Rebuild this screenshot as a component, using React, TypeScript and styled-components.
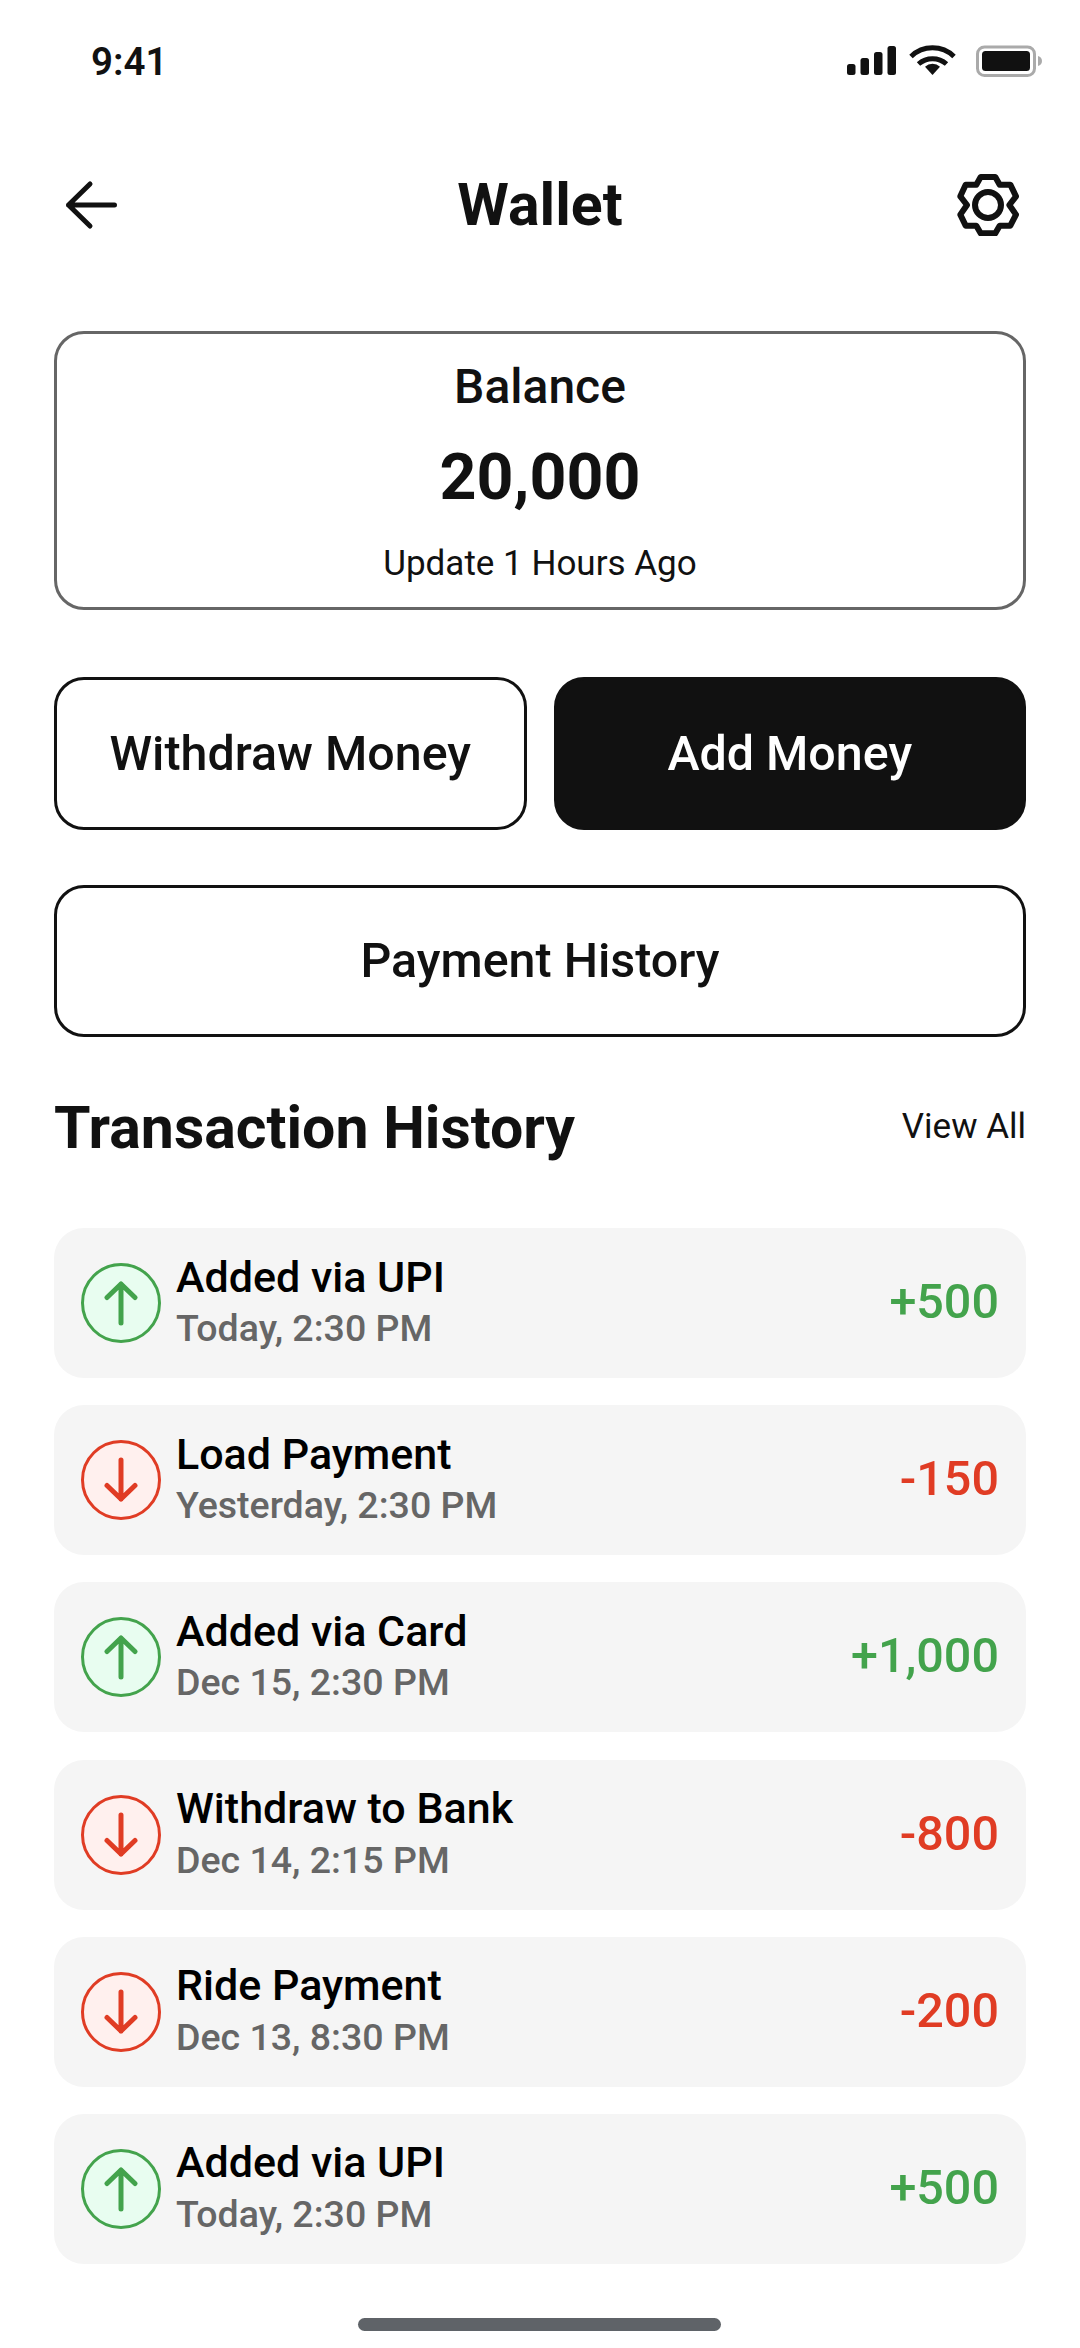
import React from "react";
import styled, { createGlobalStyle } from "styled-components";

const Global = createGlobalStyle`
  html, body { margin: 0; padding: 0; background: #fff; }
  * { box-sizing: border-box; }
`;

const Screen = styled.div`
  width: 1080px;
  height: 2348px;
  overflow: hidden;
  background: #fff;
  color: #111;
  font-family: Roboto, "Liberation Sans", sans-serif;
  display: flex;
  flex-direction: column;
`;

const StatusBar = styled.div`
  height: 124px;
  padding: 39px 38px 0 91px;
  display: flex;
  justify-content: space-between;
  align-items: flex-start;
`;

const Clock = styled.div`
  font-size: 38.5px;
  font-weight: 600;
  line-height: 46px;
  color: #111;
`;

const StatusIcons = styled.svg`
  display: block;
  margin-top: 6px;
`;

const Header = styled.div`
  height: 162px;
  padding: 0 61px 0 64px;
  display: flex;
  align-items: center;
  justify-content: space-between;
`;

const Title = styled.h1`
  margin: 0 0 0 3px;
  font-size: 59px;
  font-weight: 700;
  line-height: 66px;
  color: #111;
`;

const Content = styled.div`
  padding: 0 54px;
  display: flex;
  flex-direction: column;
  margin-top: 45px;
`;

const BalanceCard = styled.section`
  height: 279px;
  border: 3px solid #666;
  border-radius: 30px;
  display: flex;
  flex-direction: column;
  align-items: center;
  padding-top: 26px;
`;

const BalanceLabel = styled.div`
  font-size: 48px;
  font-weight: 500;
  line-height: 54px;
`;

const BalanceValue = styled.div`
  font-size: 64.5px;
  font-weight: 700;
  line-height: 78px;
  margin-top: 24px;
`;

const BalanceNote = styled.div`
  font-size: 35px;
  font-weight: 400;
  line-height: 44px;
  margin-top: 26px;
`;

const ButtonRow = styled.div`
  display: grid;
  grid-template-columns: 1fr 1fr;
  gap: 27px;
  margin-top: 67px;
`;

const ActionButton = styled.button<{ $dark?: boolean }>`
  height: 152.5px;
  width: 100%;
  padding: 0;
  border-radius: 30px;
  border: 3px solid #111;
  background: ${(p) => (p.$dark ? "#111" : "#fff")};
  color: ${(p) => (p.$dark ? "#fff" : "#111")};
  font-family: inherit;
  font-size: 48.4px;
  font-weight: 500;
`;

const HistoryButton = styled(ActionButton)`
  margin-top: 55px;
`;

const SectionHead = styled.div`
  display: flex;
  justify-content: space-between;
  align-items: center;
  height: 66px;
  margin-top: 58px;
`;

const SectionTitle = styled.h2`
  margin: 0;
  font-size: 59px;
  font-weight: 700;
  line-height: 66px;
  color: #111;
`;

const ViewAll = styled.span`
  font-size: 35px;
  font-weight: 400;
  color: #111;
  margin-bottom: 4px;
`;

const List = styled.div`
  display: flex;
  flex-direction: column;
  gap: 27.2px;
  margin-top: 67px;
`;

const Row = styled.div`
  height: 150px;
  background: #f5f5f5;
  border-radius: 30px;
  padding: 0 27px;
  display: flex;
  align-items: center;
  gap: 15px;
`;

const Bubble = styled.div<{ $up: boolean }>`
  width: 80px;
  height: 80px;
  flex: none;
  border-radius: 50%;
  border: 3px solid ${(p) => (p.$up ? "#43a34c" : "#e03c24")};
  background: ${(p) => (p.$up ? "#e8fdf0" : "#fff0ee")};
  color: ${(p) => (p.$up ? "#43a34c" : "#e03c24")};
  display: flex;
  align-items: center;
  justify-content: center;
`;

const RowText = styled.div`
  flex: 1;
  min-width: 0;
  display: flex;
  flex-direction: column;
  gap: 4.5px;
  padding-bottom: 4.5px;
`;

const RowTitle = styled.div`
  font-size: 43px;
  font-weight: 500;
  line-height: 50px;
  color: #000;
`;

const RowTime = styled.div`
  font-size: 37.5px;
  font-weight: 500;
  line-height: 44px;
  color: #666;
`;

const Amount = styled.div<{ $up: boolean }>`
  font-size: 48.5px;
  font-weight: 500;
  padding-bottom: 3px;
  color: ${(p) => (p.$up ? "#43a34c" : "#e03c24")};
`;

const HomeBar = styled.div`
  position: absolute;
  left: 358px;
  top: 2318px;
  width: 363px;
  height: 13px;
  border-radius: 7px;
  background: #5f6368;
`;

const Arrow = ({ up }: { up: boolean }) => (
  <svg width="34" height="46" viewBox="0 0 34 46" fill="none" stroke="currentColor" strokeWidth="5" strokeLinecap="round" strokeLinejoin="round">
    {up ? <path d="M17 43V4M3 17.500L17 4l14 13.500" /> : <path d="M17 3v39M3 28.500L17 42l14-13.500" />}
  </svg>
);

const rows = [
  { up: true, t: "Added via UPI", s: "Today, 2:30 PM", a: "+500" },
  { up: false, t: "Load Payment", s: "Yesterday, 2:30 PM", a: "-150" },
  { up: true, t: "Added via Card", s: "Dec 15, 2:30 PM", a: "+1,000" },
  { up: false, t: "Withdraw to Bank", s: "Dec 14, 2:15 PM", a: "-800" },
  { up: false, t: "Ride Payment", s: "Dec 13, 8:30 PM", a: "-200" },
  { up: true, t: "Added via UPI", s: "Today, 2:30 PM", a: "+500" },
];

export default function App() {
  return (
    <Screen>
      <Global />
      <StatusBar>
        <Clock>9:41</Clock>
        <StatusIcons width="196" height="32" viewBox="846 46 196 32" fill="none">
          <g fill="#111">
            <rect x="847" y="65" width="8.500" height="11" rx="2.500" />
            <rect x="860.500" y="59" width="8.500" height="17" rx="2.500" />
            <rect x="874" y="53" width="8.500" height="23" rx="2.500" />
            <rect x="887.500" y="47" width="8.500" height="29" rx="2.500" />
            <path d="M932.500 76l-7.500-8.200a10.800 10.800 0 0 1 15 0z" />
          </g>
          <g stroke="#111" strokeWidth="5" strokeLinecap="butt">
            <path d="M911 57.500a31 31 0 0 1 43 0" />
            <path d="M918.500 65a21 21 0 0 1 28 0" />
          </g>
          <rect x="977.500" y="48" width="57" height="28.500" rx="7" stroke="#aaa" strokeWidth="3" />
          <rect x="982" y="52" width="48" height="20" rx="3.500" fill="#111" />
          <path d="M1038 57c2.500.6 4 2.500 4 5s-1.500 4.400-4 5z" fill="#aaa" />
        </StatusIcons>
      </StatusBar>
      <Header>
        <svg width="56" height="52" viewBox="0 0 56 52" fill="none" stroke="#111" strokeWidth="5" strokeLinecap="round" strokeLinejoin="round">
          <path d="M50.500 26H4.500M26 5L4.500 26 26 47" />
        </svg>
        <Title>Wallet</Title>
        <svg width="62" height="62" viewBox="80 68 186 186" fill="none" stroke="#111" strokeWidth="18" strokeLinejoin="round">
          <path d="M151 77H195L208 100H240L257 135L237 161L257 190L240 223H208L195 246H151L138 223H106L90 190L110 161L90 135L106 100H138Z" />
          <circle cx="173" cy="161" r="39" />
        </svg>
      </Header>
      <Content>
        <BalanceCard>
          <BalanceLabel>Balance</BalanceLabel>
          <BalanceValue>20,000</BalanceValue>
          <BalanceNote>Update 1 Hours Ago</BalanceNote>
        </BalanceCard>
        <ButtonRow>
          <ActionButton>Withdraw Money</ActionButton>
          <ActionButton $dark>Add Money</ActionButton>
        </ButtonRow>
        <HistoryButton>Payment History</HistoryButton>
        <SectionHead>
          <SectionTitle>Transaction History</SectionTitle>
          <ViewAll>View All</ViewAll>
        </SectionHead>
        <List>
          {rows.map((r, i) => (
            <Row key={i}>
              <Bubble $up={r.up}>
                <Arrow up={r.up} />
              </Bubble>
              <RowText>
                <RowTitle>{r.t}</RowTitle>
                <RowTime>{r.s}</RowTime>
              </RowText>
              <Amount $up={r.up}>{r.a}</Amount>
            </Row>
          ))}
        </List>
      </Content>
      <HomeBar />
    </Screen>
  );
}
